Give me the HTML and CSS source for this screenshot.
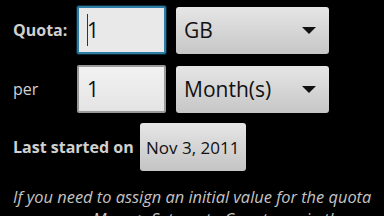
FILE: index.html
```html
<!DOCTYPE html>
<html lang="en">
<head>
    <meta charset="UTF-8">
    <title>Quota</title>
    <link rel="stylesheet" href="styles.css">
</head>
<body>
    <div class="quota-form">
        <div class="form-row row-quota">
            <label class="row-label bold">Quota:</label>
            <div class="text-field focused"><span class="caret"></span>1</div>
            <div class="spinner">
                <span>GB</span>
                <span class="arrow"></span>
            </div>
        </div>
        <div class="form-row row-per">
            <label class="row-label">per</label>
            <div class="text-field">1</div>
            <div class="spinner">
                <span>Month(s)</span>
                <span class="arrow"></span>
            </div>
        </div>
        <div class="form-row row-started">
            <label class="row-label bold">Last started on</label>
            <button class="date-btn">Nov 3, 2011</button>
        </div>
        <p class="hint">If you need to assign an initial value for the quota usage, use Menu &gt; Set quota Counters... in the main screen.</p>
    </div>
</body>
</html>
```
FILE: styles.css
```css
body {
    margin: 0;
    background-color: #000;
    color: #d0d0d0;
    font-family: "Open Sans", "Noto Sans", sans-serif;
    overflow: hidden;
    height: 216px;
}
.quota-form {
    padding: 6px 0 0 13px;
}
.form-row {
    display: flex;
    align-items: center;
}
.row-per {
    margin-top: 11px;
}
.row-started {
    margin-top: 10px;
}
.row-label {
    width: 64px;
    font-size: 16px;
}
.row-label.bold {
    font-weight: bold;
}
.row-started .row-label {
    width: auto;
    margin-right: 6px;
}
.text-field {
    box-sizing: border-box;
    width: 89px;
    height: 48px;
    background: linear-gradient(#f2f2f2, #e4e4e4);
    border: 2px solid #9a9a9a;
    border-radius: 2px;
    color: #111;
    font-size: 21px;
    padding-left: 8px;
    display: flex;
    align-items: center;
}
.text-field.focused {
    background: #e9e9e9;
    border-color: #2c7ea4;
    box-shadow: 0 0 0 1px #0c2a38;
}
.caret {
    display: inline-block;
    width: 1px;
    height: 32px;
    background: #333;
    margin-right: -1px;
}
.spinner {
    box-sizing: border-box;
    width: 153px;
    height: 47px;
    margin-left: 10px;
    background: linear-gradient(#e6e6e6, #c6c6c6);
    border-radius: 3px;
    color: #111;
    font-size: 21px;
    padding: 0 13px 0 8px;
    display: flex;
    align-items: center;
    justify-content: space-between;
}
.arrow {
    width: 0;
    height: 0;
    border-left: 7px solid transparent;
    border-right: 7px solid transparent;
    border-top: 7px solid #111;
}
.date-btn {
    box-sizing: border-box;
    width: 106px;
    height: 48px;
    border: none;
    border-radius: 3px;
    background: linear-gradient(#e6e6e6, #c4c4c4);
    color: #111;
    font-family: inherit;
    font-size: 17px;
    padding: 0;
}
.hint {
    margin: 15px 4px 0 0;
    font-size: 16.4px;
    font-style: italic;
    line-height: 22px;
    color: #c4c4c4;
}
```
